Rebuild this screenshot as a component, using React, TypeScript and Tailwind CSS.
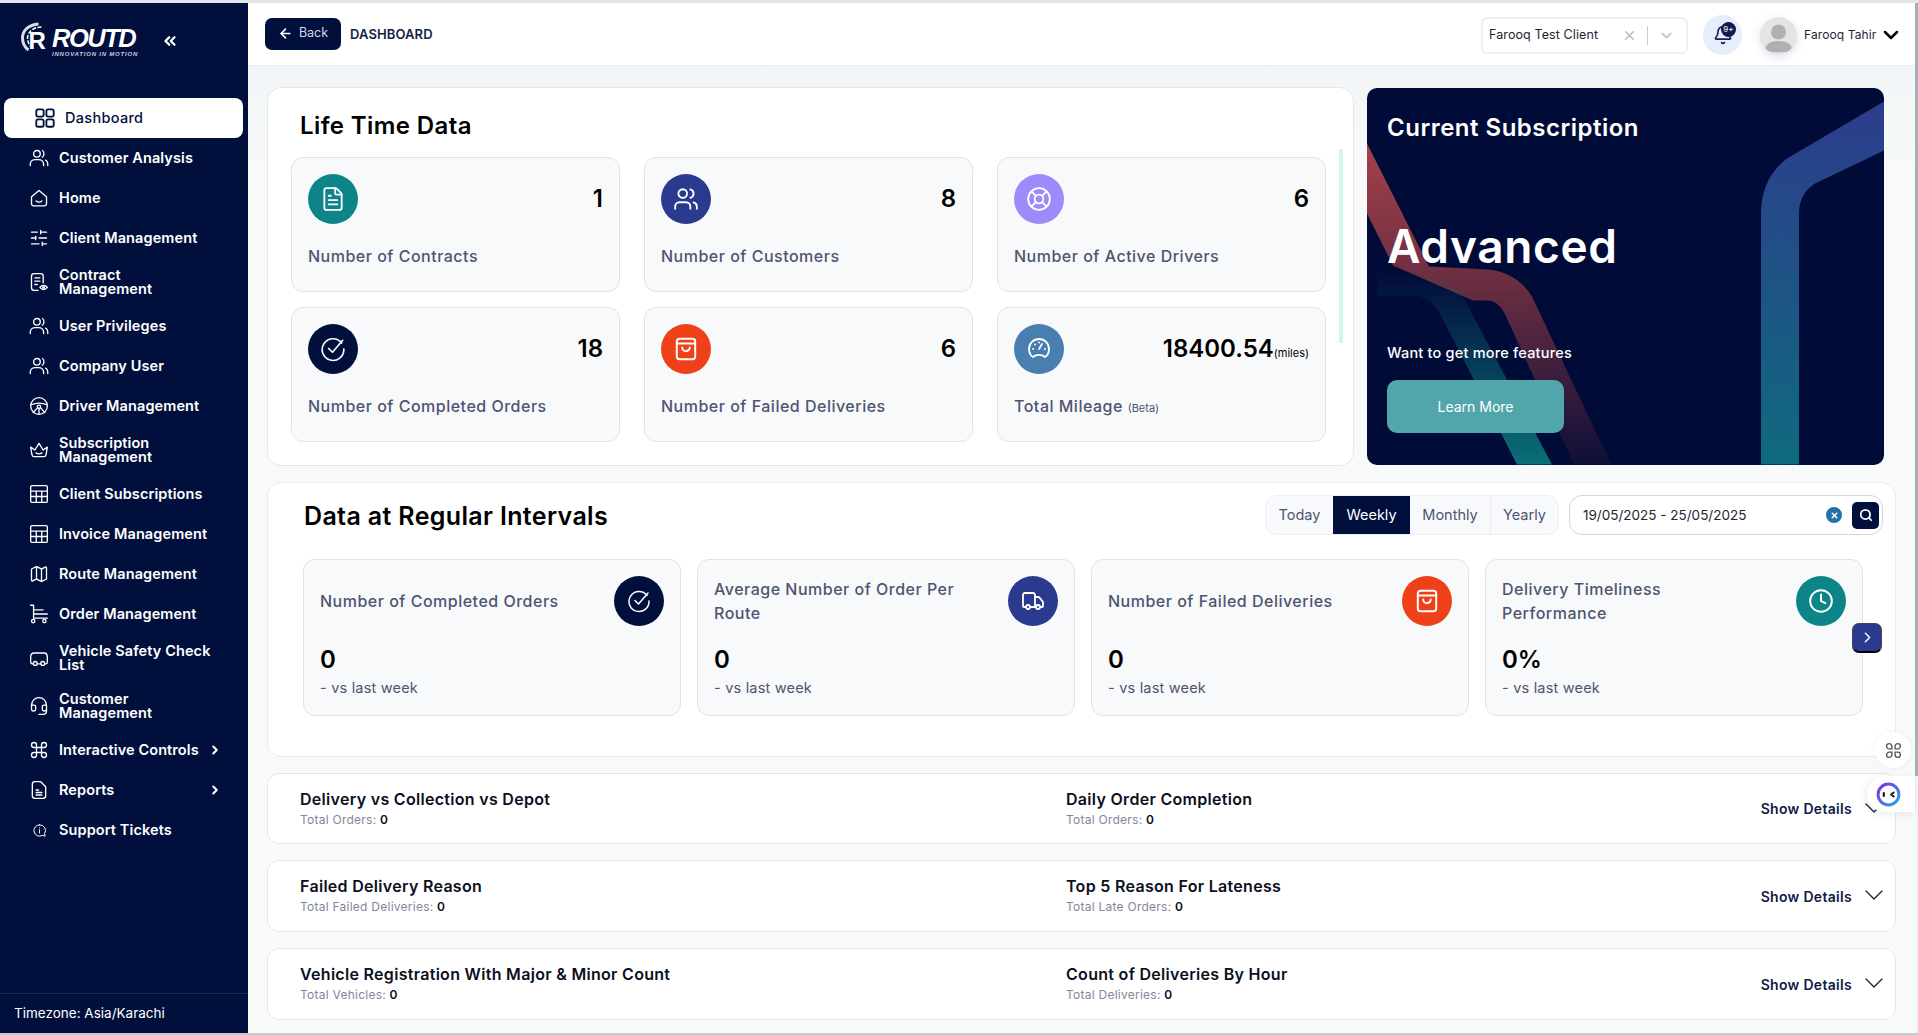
import React from "react"
import {
  ArrowLeft,
  Bell,
  ChevronDown,
  ChevronRight,
  ChevronsLeft,
  Clock,
  Command,
  FileText,
  Headset,
  LifeBuoy,
  Map,
  Search,
  SlidersHorizontal,
  Truck,
  Users,
  X,
} from "lucide-react"

type IconProps = { className?: string; strokeWidth?: number }

const svgBase = {
  viewBox: "0 0 24 24",
  fill: "none",
  stroke: "currentColor",
  strokeWidth: 1.6,
  strokeLinecap: "round" as const,
  strokeLinejoin: "round" as const,
}

const GridIcon = ({ className }: IconProps) => (
  <svg {...svgBase} strokeWidth={2} className={className}>
    <rect x="2.5" y="2.5" width="8" height="8" rx="2" />
    <rect x="13.5" y="2.5" width="8" height="8" rx="2" />
    <rect x="2.5" y="13.5" width="8" height="8" rx="2" />
    <rect x="13.5" y="13.5" width="8" height="8" rx="2" />
  </svg>
)

const PeopleIcon = ({ className }: IconProps) => (
  <svg {...svgBase} className={className}>
    <circle cx="9.5" cy="7" r="4" />
    <path d="M1.5 21v-1.5c0-3.5 3-5.5 6-5.5h4c3 0 6 2 6 5.5V21" />
    <path d="M16 3c2.6 1 2.6 7 0 8" />
    <path d="M20 14.5c1.6 1 2.5 2.6 2.5 4.5v2" />
  </svg>
)

const HomeIcon = ({ className }: IconProps) => (
  <svg {...svgBase} className={className}>
    <path d="M3 10.5 12 3l9 7.5V19a2.5 2.5 0 0 1-2.5 2.5h-13A2.5 2.5 0 0 1 3 19z" />
    <path d="M8.5 15.5c2 1.6 5 1.6 7 0" />
  </svg>
)

const ContractIcon = ({ className }: IconProps) => (
  <svg {...svgBase} className={className}>
    <path d="M11 22H6a3 3 0 0 1-3-3V5a3 3 0 0 1 3-3h8a3 3 0 0 1 3 3v8" />
    <path d="M7 7h6M7 11h6M7 15h3" />
    <path d="M13 18.5c2.5-3.4 6.500-3.400 9 0-2.500 3.400-6.500 3.400-9 0z" />
    <circle cx="17.500" cy="18.500" r="1" />
  </svg>
)

const WheelIcon = ({ className }: IconProps) => (
  <svg {...svgBase} className={className}>
    <circle cx="12" cy="12" r="10" />
    <circle cx="12" cy="13" r="2" />
    <path d="M2.500 10.500c6-2.500 13-2.500 19 0M10.300 14 5 20M13.700 14 19 20M12 15v7" />
  </svg>
)

const CrownIcon = ({ className }: IconProps) => (
  <svg {...svgBase} className={className}>
    <path d="M2 8.500 7 12l5-8 5 8 5-3.500-1.500 9a3 3 0 0 1-3 2.500h-11a3 3 0 0 1-3-2.500z" />
    <path d="M8.500 15.500c2 1.400 5 1.400 7 0" />
  </svg>
)

const TableIcon = ({ className }: IconProps) => (
  <svg {...svgBase} className={className}>
    <rect x="2" y="2" width="20" height="20" rx="1.500" />
    <path d="M2 8.500h20M2 15h20M8.700 8.500V22M15.300 8.500V22" />
  </svg>
)

const CartIcon = ({ className }: IconProps) => (
  <svg {...svgBase} className={className}>
    <path d="M2 1.500h3.500V17H22" />
    <path d="M5.500 7H17M5.500 12H22" />
    <circle cx="5" cy="20.500" r="2" />
    <circle cx="18.500" cy="20.500" r="2" />
  </svg>
)

const VehicleIcon = ({ className }: IconProps) => (
  <svg {...svgBase} className={className}>
    <path d="M5 19H4a2 2 0 0 1-2-2v-6c0-3 1.500-5 4-5h12c2.500 0 4 2 4 5v6a2 2 0 0 1-2 2h-1M10 19h4" />
    <circle cx="7.500" cy="18.500" r="2.300" />
    <circle cx="16.500" cy="18.500" r="2.300" />
  </svg>
)

const ReportIcon = ({ className }: IconProps) => (
  <svg {...svgBase} className={className}>
    <path d="M14 2H7a3 3 0 0 0-3 3v14a3 3 0 0 0 3 3h10a3 3 0 0 0 3-3V8z" />
    <path d="M8.500 12h3M8.500 15h7M8.500 18h7" />
  </svg>
)

const TicketIcon = ({ className }: IconProps) => (
  <svg {...svgBase} className={className}>
    <path d="M12 3a9 9 0 1 0 4.500 16.800L21 21l-1-4A9 9 0 0 0 12 3z" />
    <path d="M12 11v5M12 7.800v.1" />
  </svg>
)

const GaugeIcon = ({ className }: IconProps) => (
  <svg {...svgBase} strokeWidth={1.8} className={className}>
    <path d="M6 20c-2.500-1.500-4-4.500-4-8a10 10 0 0 1 20 0c0 3.500-1.500 6.500-4 8-3-2.800-9-2.800-12 0z" />
    <path d="m12 12 3-5M6 12h.1M8 7.500h.1M12 5.500h.1M18 12h.1" />
  </svg>
)

const CheckRingIcon = ({ className }: IconProps) => (
  <svg {...svgBase} strokeWidth={1.5} className={className}>
    <path d="M20 6.500A10 10 0 1 0 22 12" />
    <path d="m8 11.500 3.500 3.500L21 4" />
  </svg>
)

const BagIcon = ({ className }: IconProps) => (
  <svg {...svgBase} strokeWidth={1.8} className={className}>
    <rect x="3.500" y="2.500" width="17" height="19" rx="2.500" />
    <path d="M3.500 7h17" />
    <path d="M8.500 10.500a3.500 3.500 0 0 0 7 0" />
  </svg>
)

const Logo = () => (
  <div className="w-[125px] shrink-0 flex items-start gap-[2px] text-white">
    <svg viewBox="0 0 30 32" className="w-[31px] h-[32px] shrink-0">
      <path d="M19 2C8 3 3 9 3 16c0 5 2 9 6 12" fill="none" stroke="#d8dde8" strokeWidth="3" />
      <path d="M22 5C14 5 8 10 8 16c0 3 1 6 3 8" fill="none" stroke="#ffffff" strokeWidth="1.500" strokeDasharray="4 1.500" />
      <text x="9" y="27" fontFamily="'Liberation Sans', sans-serif" fontWeight="700" fontSize="24" fill="#ffffff">R</text>
    </svg>
    <div className="flex flex-col mt-[5px]">
      <span className="font-['Liberation_Sans',sans-serif] italic font-bold text-[25.500px] leading-[23px] tracking-[-1.500px]">
        ROUTD
      </span>
      <span className="font-['Liberation_Sans',sans-serif] italic font-bold text-[6px] leading-[8px] tracking-[0.800px] whitespace-nowrap text-[#c9cedb]">
        INNOVATION IN MOTION
      </span>
    </div>
  </div>
)

const menu = [
  { label: "Customer Analysis", icon: PeopleIcon, w: "w-[153px]" },
  { label: "Home", icon: HomeIcon, w: "w-[153px]" },
  { label: "Client Management", icon: SlidersHorizontal, w: "w-[153px]" },
  { label: "Contract Management", icon: ContractIcon, tall: true, w: "w-[130px]" },
  { label: "User Privileges", icon: PeopleIcon, w: "w-[153px]" },
  { label: "Company User", icon: PeopleIcon, w: "w-[153px]" },
  { label: "Driver Management", icon: WheelIcon, w: "w-[153px]" },
  { label: "Subscription Management", icon: CrownIcon, tall: true, w: "w-[130px]" },
  { label: "Client Subscriptions", icon: TableIcon, w: "w-[153px]" },
  { label: "Invoice Management", icon: TableIcon, w: "w-[153px]" },
  { label: "Route Management", icon: Map, w: "w-[153px]" },
  { label: "Order Management", icon: CartIcon, w: "w-[153px]" },
  { label: "Vehicle Safety Check List", icon: VehicleIcon, tall: true, w: "w-[153px]" },
  { label: "Customer Management", icon: Headset, tall: true, w: "w-[130px]" },
  { label: "Interactive Controls", icon: Command, arrow: true, w: "w-[149px]" },
  { label: "Reports", icon: ReportIcon, arrow: true, w: "w-[149px]" },
  { label: "Support Tickets", icon: TicketIcon, small: true, w: "w-[153px]" },
]

const Sidebar = () => (
  <aside className="w-[248px] shrink-0 h-full bg-[#010f3c] flex flex-col">
    <div className="h-[95px] shrink-0 pl-[19px] pt-[19px] flex items-start">
      <Logo />
      <ChevronsLeft className="w-[18px] h-[18px] text-white mt-[10px] ml-[17px]" strokeWidth={3} />
    </div>
    <nav className="flex-1 flex flex-col px-[4px]">
      <div className="h-[40px] mr-[1px] shrink-0 bg-white rounded-[8px] flex items-center pl-[30px] gap-[9px] text-[#010f3c]">
        <GridIcon className="w-[22px] h-[22px]" />
        <span className="text-[14.500px] font-medium tracking-[0.300px]">Dashboard</span>
      </div>
      {menu.map((item) => (
        <div
          key={item.label}
          className={
            item.tall
              ? "h-[48px] shrink-0 flex items-center pl-[25px] text-white"
              : "h-[40px] shrink-0 flex items-center pl-[25px] text-white"
          }
        >
          <span className="w-[30px] shrink-0 flex">
            <item.icon className={item.small ? "w-[15px] h-[15px] ml-[3px]" : "w-[20px] h-[20px]"} strokeWidth={1.600} />
          </span>
          <span className={`${item.w} text-[14.500px] leading-[14px] font-semibold tracking-[0.100px]`}>{item.label}</span>
          {item.arrow && <ChevronRight className="w-[14px] h-[14px]" strokeWidth={3.500} />}
        </div>
      ))}
    </nav>
    <div className="h-[40px] shrink-0 border-t border-[#1b2852] pl-[14px] flex items-center text-[13.500px] text-white">
      Timezone: Asia/Karachi
    </div>
  </aside>
)

const Header = () => (
  <header className="h-[63px] shrink-0 bg-white border-b border-[#eceff5] flex items-center pl-[17px] pt-[2px]">
    <button className="w-[76px] h-[32px] mt-[-3px] bg-[#010f3c] rounded-[7px] flex items-center justify-center gap-[6px] text-[#d5d9e4] text-[12.500px]">
      <ArrowLeft className="w-[15px] h-[15px] text-white" strokeWidth={2.500} />
      Back
    </button>
    <span className="ml-[9px] text-[13px] font-semibold tracking-[0.100px] text-[#141f45]">DASHBOARD</span>
    <div className="ml-auto flex items-center">
      <div className="w-[207px] h-[37px] border-2 border-[#eeeef7] rounded-[6px] flex items-center pl-[6px] text-[12.500px] text-[#1f2430]">
        <span className="w-[133px] tracking-[0.100px]">Farooq Test Client</span>
        <X className="w-[15px] h-[15px] text-[#bdbdbd]" strokeWidth={2.500} />
        <span className="w-px h-[19px] bg-[#cccccc] ml-[10px]" />
        <ChevronDown className="w-[17px] h-[17px] text-[#c4c4c4] ml-[10px]" strokeWidth={2.500} />
      </div>
      <div className="relative w-[39px] h-[40px] ml-[15px] rounded-full bg-[#e8edfb] flex items-center justify-center">
        <Bell className="w-[20px] h-[20px] text-[#141f55]" strokeWidth={2} />
        <span className="absolute top-[7px] right-[6px] w-[15px] h-[15px] rounded-full bg-[#101a50] text-white text-[8px] leading-[15px] text-center">
          9+
        </span>
      </div>
      <div className="w-[37px] h-[37px] ml-[18px] rounded-full bg-[#e4e4e4] overflow-hidden shadow-[0_3px_8px_rgba(120,130,180,0.25)]">
        <svg viewBox="0 0 37 37" className="w-full h-full">
          <circle cx="18.500" cy="15" r="7.500" fill="#adb1b4" />
          <path d="M5 33c0-6 6-9 13.500-9S32 27 32 33c-3 3-24 3-27 0z" fill="#adb1b4" />
        </svg>
      </div>
      <span className="ml-[7px] w-[72px] text-[12px] tracking-[0.100px] whitespace-nowrap text-[#1f2430]">Farooq Tahir</span>
      <ChevronDown className="w-[24px] h-[24px] ml-[3px] mr-[12px] text-black" strokeWidth={2.500} />
    </div>
  </header>
)

const lifetime = [
  { label: "Number of Contracts", value: "1", color: "bg-[#0d8588]", icon: FileText },
  { label: "Number of Customers", value: "8", color: "bg-[#2a3a8e]", icon: Users },
  { label: "Number of Active Drivers", value: "6", color: "bg-[#9d8bfb]", icon: LifeBuoy },
  { label: "Number of Completed Orders", value: "18", color: "bg-[#010f3c]", icon: CheckRingIcon },
  { label: "Number of Failed Deliveries", value: "6", color: "bg-[#ef4119]", icon: BagIcon },
]

const LifeTimeCard = ({ item }: { item: (typeof lifetime)[number] }) => (
  <div className="h-[135px] bg-[#f8f9fb] border border-[#e2e3e6] rounded-[12px] pl-[16px] pr-[16px] pt-[16px]">
    <div className="flex items-center justify-between">
      <span className={`w-[50px] h-[50px] rounded-full flex items-center justify-center text-white ${item.color}`}>
        <item.icon className="w-[26px] h-[26px]" strokeWidth={1.700} />
      </span>
      <span className="text-[24px] font-semibold text-black">{item.value}</span>
    </div>
    <p className="mt-[20px] text-[16px] leading-[24px] font-medium tracking-[0.500px] text-[#4d556f]">{item.label}</p>
  </div>
)

const LifeTimePanel = () => (
  <section className="relative w-[1087px] h-[379px] bg-white border border-[#e4e6ea] rounded-[14px] pl-[23px] pt-[20px]">
    <h2 className="pl-[9px] text-[24px] leading-[36px] font-semibold text-black tracking-[0.400px]">Life Time Data</h2>
    <div className="mt-[13px] grid grid-cols-[329px_329px_329px] gap-x-[24px] gap-y-[15px]">
      {lifetime.map((item) => (
        <LifeTimeCard key={item.label} item={item} />
      ))}
      <div className="h-[135px] bg-[#f8f9fb] border border-[#e2e3e6] rounded-[12px] pl-[16px] pr-[16px] pt-[16px]">
        <div className="flex items-center justify-between">
          <span className="w-[50px] h-[50px] rounded-full flex items-center justify-center text-white bg-[#497eb0]">
            <GaugeIcon className="w-[24px] h-[24px]" />
          </span>
          <span className="text-[24px] font-semibold text-black">
            18400.54<span className="text-[11px] font-normal">(miles)</span>
          </span>
        </div>
        <p className="mt-[20px] text-[16px] leading-[24px] font-medium tracking-[0.500px] text-[#4d556f]">
          Total Mileage <span className="text-[11px] font-normal tracking-normal">(Beta)</span>
        </p>
      </div>
    </div>
    <span className="absolute left-[1071px] top-[61px] w-[4px] h-[194px] bg-[#d2f5ec]" />
  </section>
)

const SubscriptionCard = () => (
  <section className="relative w-[517px] h-[377px] mt-[1px] bg-[#010b38] rounded-[10px] overflow-hidden text-white pl-[20px]">
    <svg viewBox="0 0 517 376" className="absolute inset-0 w-full h-full">
      <defs>
        <linearGradient id="blue" x1="0" y1="0" x2="0" y2="1">
          <stop offset="0" stopColor="#2d3c8d" />
          <stop offset="1" stopColor="#0f6a7e" />
        </linearGradient>
        <linearGradient id="red" x1="0" y1="0" x2="0" y2="1">
          <stop offset="0" stopColor="#a6404a" />
          <stop offset="0.45" stopColor="#682d41" />
          <stop offset="1" stopColor="#0f0f38" />
        </linearGradient>
        <linearGradient id="teal" x1="0" y1="0" x2="0" y2="1">
          <stop offset="0" stopColor="#0a6f78" stopOpacity="0" />
          <stop offset="1" stopColor="#0a6f78" />
        </linearGradient>
      </defs>
      <path d="M517 13 L420 70 Q394 90 394 125 L394 376 L432 376 L432 125 Q432 105 448 95 L517 62 Z" fill="url(#blue)" />
      <path d="M0 55 L62 178 L121 181 Q150 184 165 208 L244 376 L207 376 L139 228 Q132 212 120 212 L106 212 L26 177 L0 125 Z" fill="url(#red)" />
      <path d="M10 182 L47 182 Q80 185 98 212 L185 376 L150 376 L73 225 Q62 207 47 207 L10 207 Z" fill="url(#teal)" />
    </svg>
    <div className="relative flex flex-col items-start">
      <h2 className="mt-[22px] text-[24px] leading-[36px] font-semibold tracking-[0.500px]">Current Subscription</h2>
      <p className="mt-[68px] text-[46px] leading-[64px] font-semibold tracking-[0.600px]">Advanced</p>
      <p className="mt-[63px] text-[14.500px] leading-[24px] font-medium tracking-[0.200px]">Want to get more features</p>
      <button className="mt-[15px] w-[177px] h-[53px] bg-[#52a6ab] rounded-[10px] text-[14px] text-white">Learn More</button>
    </div>
  </section>
)

const intervals = [
  { label: "Number of Completed Orders", value: "0", color: "bg-[#010f3c]", icon: CheckRingIcon, size: "w-[24px] h-[24px]" },
  { label: "Average Number of Order Per Route", value: "0", color: "bg-[#2a3a8e]", icon: Truck, size: "w-[24px] h-[24px]" },
  { label: "Number of Failed Deliveries", value: "0", color: "bg-[#ef4119]", icon: BagIcon, size: "w-[26px] h-[26px]" },
  { label: "Delivery Timeliness Performance", value: "0%", color: "bg-[#0d8588]", icon: Clock, size: "w-[26px] h-[26px]" },
]

const IntervalsPanel = () => (
  <section className="relative w-[1629px] h-[275px] mt-[16px] bg-white border border-[#e9ebf0] rounded-[14px] pl-[35px]">
    <div className="h-[76px] flex items-start pt-[12px] pr-[12px]">
      <h2 className="mt-[3px] ml-[1px] text-[25px] leading-[36px] font-semibold text-black tracking-[0.350px]">Data at Regular Intervals</h2>
      <div className="ml-auto h-[40px] flex items-stretch bg-[#f8f9fc] border border-[#eceef5] rounded-[12px] overflow-hidden text-[14.500px] text-[#4d556f]">
        <span className="w-[67px] flex items-center justify-center">Today</span>
        <span className="w-[77px] flex items-center justify-center bg-[#010f3c] text-white">Weekly</span>
        <span className="w-[80px] flex items-center justify-center">Monthly</span>
        <span className="w-[68px] flex items-center justify-center border-l border-[#eceef5]">Yearly</span>
      </div>
      <div className="ml-[10px] w-[314px] h-[40px] flex items-center bg-white border border-[#d4d6da] rounded-[13px] pl-[13px] pr-[3px] text-[13.500px] text-[#1f2430]">
        <span>19/05/2025 - 25/05/2025</span>
        <span className="ml-auto w-[16px] h-[16px] rounded-full bg-[#2271a8] flex items-center justify-center">
          <X className="w-[9px] h-[9px] text-white" strokeWidth={4} />
        </span>
        <span className="ml-[10px] w-[27px] h-[27px] rounded-[5px] bg-[#010f3c] flex items-center justify-center">
          <Search className="w-[14px] h-[14px] text-white" strokeWidth={3} />
        </span>
      </div>
    </div>
    <div className="grid grid-cols-[378px_378px_378px_378px] gap-x-[16px]">
      {intervals.map((item) => (
        <div key={item.label} className="h-[157px] bg-[#f8f9fb] border border-[#e2e3e6] rounded-[12px] px-[16px] pt-[16px]">
          <div className="flex justify-between">
            <p className="w-[260px] min-h-[50px] flex items-center text-[16px] leading-[24px] font-medium tracking-[0.500px] text-[#4d556f]">
              {item.label}
            </p>
            <span className={`w-[50px] h-[50px] rounded-full flex items-center justify-center text-white ${item.color}`}>
              <item.icon className={item.size} strokeWidth={1.800} />
            </span>
          </div>
          <p className="mt-[18px] text-[24px] leading-[32px] font-semibold text-black">{item.value}</p>
          <p className="mt-[2px] text-[14.500px] leading-[20px] tracking-[0.200px] text-[#4d556f]">- vs last week</p>
        </div>
      ))}
    </div>
    <button className="absolute left-[1584px] top-[140px] w-[30px] h-[30px] rounded-[7px] bg-[#2a3a8e] border border-[#44464f] border-b-2 border-b-black flex items-center justify-center">
      <ChevronRight className="w-[17px] h-[17px] text-white" strokeWidth={2} />
    </button>
  </section>
)

const rows = [
  { a: "Delivery vs Collection vs Depot", as: "Total Orders:", b: "Daily Order Completion", bs: "Total Orders:", h: "h-[71px] pb-[2px]" },
  { a: "Failed Delivery Reason", as: "Total Failed Deliveries:", b: "Top 5 Reason For Lateness", bs: "Total Late Orders:", h: "h-[72px] pb-[2px]" },
  { a: "Vehicle Registration With Major & Minor Count", as: "Total Vehicles:", b: "Count of Deliveries By Hour", bs: "Total Deliveries:", h: "h-[72px] pb-[2px]" },
]

const RowTitle = ({ title, sub }: { title: string; sub: string }) => (
  <div>
    <p className="text-[16px] leading-[24px] font-semibold tracking-[0.300px] text-[#0b0f1e]">{title}</p>
    <p className="text-[12px] leading-[18px] tracking-[0.250px] text-[#7f8899]">
      {sub} <span className="font-semibold text-[#0b0f1e]">0</span>
    </p>
  </div>
)

const DetailRows = () => (
  <div className="flex flex-col gap-[16px] mt-[16px] w-[1629px]">
    {rows.map((row) => (
      <div key={row.a} className={`${row.h} bg-white border border-[#e4e6ea] rounded-[12px] flex items-center pl-[32px] pr-[5px]`}>
        <div className="w-[766px] shrink-0">
          <RowTitle title={row.a} sub={row.as} />
        </div>
        <RowTitle title={row.b} sub={row.bs} />
        <span className="ml-auto mt-[2px] text-[14px] font-semibold tracking-[0.300px] text-[#101a46]">Show Details</span>
        <ChevronDown className="w-[32px] h-[32px] ml-[6px] text-[#222531]" strokeWidth={1} />
      </div>
    ))}
  </div>
)

const Widgets = () => (
  <>
    <div className="absolute left-[1875px] top-[732px] w-[36px] h-[36px] rounded-full bg-white flex items-center justify-center shadow-[0_0_6px_rgba(0,0,0,0.06)]">
      <svg viewBox="0 0 16 16" fill="none" stroke="#55585f" strokeWidth="1.300" className="w-[17px] h-[17px]">
        <path d="M4 1.500a2.500 2.500 0 0 1 2.500 2.500v2.500H4A2.500 2.500 0 0 1 4 1.500z" />
        <path d="M12 1.500a2.500 2.500 0 0 0-2.500 2.500v2.500H12a2.500 2.500 0 0 0 0-5z" />
        <path d="M4 14.500A2.500 2.500 0 0 0 6.500 12V9.500H4a2.500 2.500 0 0 0 0 5z" />
        <path d="M12 14.500A2.500 2.500 0 0 1 9.500 12V9.500H12a2.500 2.500 0 0 1 0 5z" />
      </svg>
    </div>
    <div className="absolute left-[1867px] top-[776px] w-[48px] h-[36px] rounded-l-full bg-white flex items-center pl-[9px] shadow-[-2px_2px_8px_rgba(0,0,0,0.08)]">
      <svg viewBox="0 0 24 24" fill="none" className="w-[25px] h-[25px]">
        <defs>
          <linearGradient id="face" x1="0" y1="0" x2="1" y2="1">
            <stop offset="0" stopColor="#8a2be2" />
            <stop offset="1" stopColor="#1fa8ef" />
          </linearGradient>
        </defs>
        <circle cx="12" cy="12" r="10" stroke="url(#face)" strokeWidth="2.800" />
        <path d="M7.500 10.500v3" stroke="#14141f" strokeWidth="2" strokeLinecap="round" />
        <path d="m17 10-2.500 2 2.500 2" stroke="#14141f" strokeWidth="1.800" strokeLinecap="round" strokeLinejoin="round" />
      </svg>
    </div>
  </>
)

export default function App() {
  return (
    <div className="relative h-[1035px] w-[1918px] overflow-hidden flex flex-col font-['Inter',sans-serif] bg-[#f7f9fa]">
      <div className="h-[3px] shrink-0 bg-[#e3e5e9]" />
      <div className="flex-1 min-h-0 flex">
        <Sidebar />
        <main className="flex-1 min-w-0 flex flex-col">
          <Header />
          <div className="flex-1 min-h-0 overflow-hidden pl-[19px] pt-[21px] bg-linear-to-b from-[#f3f6f8] to-[#f8fafa] to-[15%]">
            <div className="flex items-start gap-[13px]">
              <LifeTimePanel />
              <SubscriptionCard />
            </div>
            <IntervalsPanel />
            <DetailRows />
          </div>
        </main>
        <div className="w-[3px] shrink-0 bg-[#f3f4f5]">
          <div className="h-[773px] bg-[#aaaeb4]" />
        </div>
      </div>
      <div className="h-[2px] shrink-0 bg-[#c9cbce]" />
      <Widgets />
    </div>
  )
}
